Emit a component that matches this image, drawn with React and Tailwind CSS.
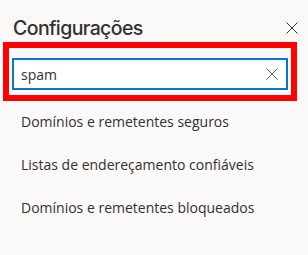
import React, { useState } from "react";

const items = [
  "Domínios e remetentes seguros",
  "Listas de endereçamento confiáveis",
  "Domínios e remetentes bloqueados",
];

const App = () => {
  const [query, setQuery] = useState("spam");

  return (
    <div className="w-[308px] h-[255px] bg-[#faf9f8] font-['Segoe_UI','Open_Sans',sans-serif] text-[#323130] overflow-hidden">
      {/* Header */}
      <div className="flex items-center justify-between pl-[13px] pr-[10px] pt-[14px] h-[42px]">
        <h1 className="text-[19.5px] leading-[28px] font-medium font-['Inter',sans-serif] tracking-[-0.6px]">
          Configurações
        </h1>
        <button type="button" className="w-[12px] h-[12px] flex items-center justify-center">
          <svg width="12" height="12" viewBox="0 0 12 12" fill="none">
            <path d="M0.5 0.5L11.5 11.5M11.5 0.5L0.5 11.5" stroke="#323130" strokeWidth="1" />
          </svg>
        </button>
      </div>

      {/* Highlighted search */}
      <div className="ml-[3px] w-[294px] h-[59px] border-[6px] border-[#ff0000] pl-[3px] pt-[10px]">
        <div className="w-[276px] h-[32px] border-2 border-[#0078d4] bg-white flex items-center pl-[7px] pr-[8px]">
          <input
            type="text"
            value={query}
            onChange={(e) => setQuery(e.target.value)}
            className="flex-1 min-w-0 outline-none text-[14px] text-[#323130] bg-transparent"
          />
          <button type="button" onClick={() => setQuery("")} className="w-[12px] h-[12px] flex items-center justify-center">
            <svg width="12" height="12" viewBox="0 0 12 12" fill="none">
              <path d="M0.5 0.5L11.5 11.5M11.5 0.5L0.5 11.5" stroke="#605e5c" strokeWidth="1" />
            </svg>
          </button>
        </div>
      </div>

      {/* Results */}
      <div className="flex flex-col -mt-[1px]">
        {items.map((item) => (
          <div key={item} className="h-[43px] flex items-center pl-[21px] text-[14px]">
            {item}
          </div>
        ))}
      </div>
    </div>
  );
};

export default App;
